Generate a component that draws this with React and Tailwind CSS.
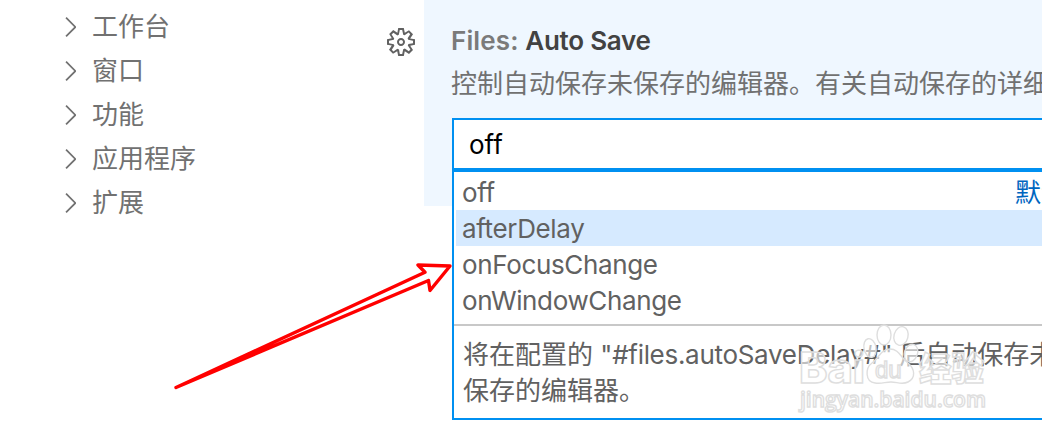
import { VscChevronRight, VscGear } from 'react-icons/vsc';

const SECTIONS = ['工作台', '窗口', '功能', '应用程序', '扩展'];

const OPTIONS = [
  { value: 'off', detail: '默认' },
  { value: 'afterDelay' },
  { value: 'onFocusChange' },
  { value: 'onWindowChange' },
];

function Sidebar() {
  return (
    <nav className="flex flex-col w-[380px] shrink-0 pt-[5px] pl-[54px] text-[#717171]">
      {SECTIONS.map((name) => (
        <div key={name} className="flex items-center h-11 gap-[6px]">
          <VscChevronRight className="w-8 h-8 shrink-0" />
          <span>{name}</span>
        </div>
      ))}
    </nav>
  );
}

function OptionList({ focused }) {
  return (
    <div className="absolute left-0 top-[52px] w-[640px] h-[250px] border-2 border-[#0090f1] bg-white text-[#616161]">
      <ul className="pt-0.5 pl-0.5">
        {OPTIONS.map(({ value, detail }) => (
          <li
            key={value}
            className={`flex items-center justify-between h-9 pt-[2px] pl-[6px] pr-[23px] tracking-[-0.36px] ${
              value === focused ? 'bg-[#d6eaff]' : ''
            }`}
          >
            <span>{value}</span>
            {detail && <span className="text-[#0066bf] tracking-normal">{detail}</span>}
          </li>
        ))}
      </ul>
      <div className="mt-[6px] border-t-2 border-[#c8c8c8] pt-[11px] pl-[9px] leading-9 whitespace-nowrap">
        <p>
          将在配置的 <span className="tracking-[-0.3px]">"#files.autoSaveDelay#" </span>后自动保存未
        </p>
        <p>保存的编辑器。</p>
      </div>
    </div>
  );
}

function Arrow() {
  return (
    <svg className="absolute left-0 top-0 w-full h-full pointer-events-none" viewBox="0 0 1042 436" fill="none">
      <path
        d="M176 387.5L425 272.3L418 265L450 266L430 290.5L428.5 280.5Z"
        stroke="#ff0000"
        strokeWidth="3.4"
        strokeLinejoin="round"
      />
    </svg>
  );
}

function Watermark() {
  return (
    <svg
      className="absolute left-[790px] top-[320px] w-[210px] h-[100px] pointer-events-none"
      viewBox="0 0 210 100"
      fill="#ffffff"
      fillOpacity="0.6"
      stroke="#dedede"
      strokeWidth="1.4"
    >
      <g fontFamily="Inter, 'Noto Sans CJK SC', sans-serif" fontWeight="800">
        <text x="9" y="63" fontSize="42" textLength="66" lengthAdjust="spacingAndGlyphs">Bai</text>
        <text x="129" y="61" fontSize="33" textLength="65" lengthAdjust="spacingAndGlyphs">经验</text>
      </g>
      <ellipse cx="80" cy="28" rx="6" ry="9.5" transform="rotate(-12 80 28)" />
      <ellipse cx="94" cy="15" rx="7" ry="10" />
      <ellipse cx="111" cy="16" rx="7" ry="9.5" transform="rotate(15 111 16)" />
      <ellipse cx="121" cy="33" rx="6.5" ry="9" transform="rotate(20 121 33)" />
      <path d="M100 29C91 29 89 38 82 43C75 48 75 62 85 63C92 64 95 62 101 62C107 62 112 65 118 62C126 58 125 49 118 43C111 38 109 29 100 29Z" />
      <text x="85" y="58" fontSize="24" fontFamily="Liberation Sans, sans-serif" fontWeight="400">du</text>
      <text x="10" y="87" fontSize="21" fontFamily="Open Sans, sans-serif" fontWeight="600" textLength="186" lengthAdjust="spacingAndGlyphs">
        jingyan.baidu.com
      </text>
    </svg>
  );
}

export default function App() {
  return (
    <div className="relative flex w-[1042px] h-[436px] overflow-hidden bg-white text-[26px] leading-9 font-['Inter','Noto_Sans_CJK_SC',sans-serif]">
      <Sidebar />
      <div className="w-11 shrink-0 pt-[26px] pl-[5px]">
        <VscGear className="w-8 h-8 text-[#616161]" />
      </div>
      <main className="grow min-w-0 h-[206px] pt-[23px] pl-7 bg-[#eff7ff]">
        <h2 className="-ml-px text-[26px] font-semibold tracking-[-0.25px] text-[#424242]">
          <span className="text-[#7a7a7a] tracking-[0.12px]">Files: </span>Auto Save
        </h2>
        <p className="-ml-px mt-[7px] text-[#717171] whitespace-nowrap">
          控制自动保存未保存的编辑器。有关自动保存的详细信息
        </p>
        <div className="relative mt-[16px] w-[640px]">
          <div className="flex items-center h-[52px] pt-[2px] pl-[15px] border-2 border-[#0090f1] bg-white text-black">
            off
          </div>
          <OptionList focused="afterDelay" />
        </div>
      </main>
      <Arrow />
      <Watermark />
    </div>
  );
}
